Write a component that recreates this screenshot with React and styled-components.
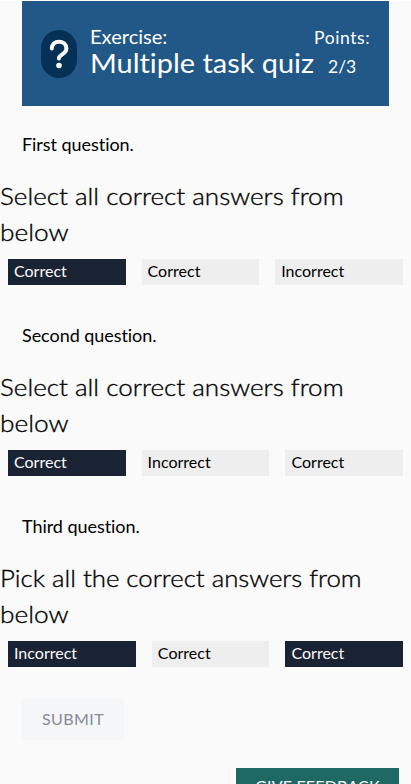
import React from "react";
import styled, { createGlobalStyle } from "styled-components";

const GlobalStyle = createGlobalStyle`
  * { box-sizing: border-box; }
  html, body { margin: 0; background: #fafafa; }
  body { height: 784px; overflow: hidden; font-family: Lato, sans-serif; color: #000; font-variant-ligatures: none; }
`;

const Page = styled.main`
  height: 784px;
  overflow: hidden;
  border-top: 1px solid #fff;
`;

const Header = styled.header`
  display: flex;
  margin: 0 22px;
  height: 105px;
  background: #215887;
  color: #fff;
`;

const Badge = styled.div`
  flex: none;
  width: 36px;
  height: 48px;
  margin: 29px 0 0 19px;
  border-radius: 18px;
  background: #063157;
  svg { display: block; }
`;

const Titles = styled.div`
  flex: none;
  width: 224px;
  margin: 24px 0 0 13px;
  white-space: nowrap;
`;

const Stretch = styled.span`
  display: inline-block;
  transform: scaleX(${(p) => p.$x});
  transform-origin: left;
  white-space: nowrap;
`;

const Kind = styled.div`
  font-size: 18.5px;
  line-height: 25px;
`;

const Title = styled.h1`
  margin: 0;
  font-size: 26.5px;
  font-weight: 400;
  line-height: 26px;
`;

const Points = styled.div`
  width: 57px;
  margin-top: 22px;
  font-size: 17.5px;
  line-height: 29px;
  white-space: nowrap;
  letter-spacing: 0.6px;
`;

const Score = styled.div`
  padding-left: 14px;
  letter-spacing: 0;
`;

const Question = styled.section`
  height: 191px;
`;

const Name = styled.p`
  margin: 0;
  padding: 24px 22px 0;
  height: 72px;
  font-size: 18px;
  line-height: 29px;
  letter-spacing: -0.05px;
`;

const Prompt = styled.h2`
  margin: 0;
  font-size: 24px;
  font-weight: 300;
  line-height: 36px;
  height: 73px;
  -webkit-text-stroke: 0.35px #000;
`;

const Options = styled.div`
  display: flex;
  gap: 16px;
  padding: 8px 8px 0;
`;

const Option = styled.button`
  flex: 1 1 auto;
  height: 26px;
  padding: 0 6px 2px;
  border: 0;
  background: ${(p) => (p.$selected ? "#1a2333" : "#eee")};
  color: ${(p) => (p.$selected ? "#fafafa" : "#000")};
  font: 16px/24px Lato, sans-serif;
  letter-spacing: 0.01px;
  word-spacing: 0;
  font-variant-ligatures: none;
  text-align: left;
`;

const Submit = styled.button`
  display: block;
  width: 102px;
  height: 41px;
  margin: 20px 0 0 22px;
  padding: 0 0 2px;
  border: 0;
  background: #f5f6f7;
  color: #868b98;
  font: 16px/39px Lato, sans-serif;
  letter-spacing: 0.4px;
`;

const Feedback = styled.button`
  display: block;
  width: 163px;
  height: 41px;
  margin: 28px 12px 0 auto;
  padding: 0 0 6px;
  border: 0;
  background: #1f6964;
  color: #fff;
  font: 16px/35px Lato, sans-serif;
  letter-spacing: 0.2px;
`;

const questions = [
  { name: "First question.", lead: "Select all correct answers from", x: 1.085,
    options: [["Correct", true], ["Correct", false], ["Incorrect", false]] },
  { name: "Second question.", lead: "Select all correct answers from", x: 1.085,
    options: [["Correct", true], ["Incorrect", false], ["Correct", false]] },
  { name: "Third question.", lead: "Pick all the correct answers from", x: 1.075,
    options: [["Incorrect", true], ["Correct", false], ["Correct", true]] },
];

export default function App() {
  return (
    <Page>
      <GlobalStyle />
      <Header>
        <Badge>
          <svg width="36" height="48" viewBox="0 0 36 48" fill="none">
            <path d="M10.8 18.5C10.8 14.2 14 11.8 18 11.8s7.4 2.6 7.4 6.7c0 5.8-7.5 5.7-7.5 10" stroke="#fff" strokeWidth="4" strokeLinecap="round" />
            <circle cx="18" cy="35.5" r="2.8" fill="#fff" />
          </svg>
        </Badge>
        <Titles>
          <Kind><Stretch $x={1.085}>Exercise:</Stretch></Kind>
          <Title><Stretch $x={1.09}>Multiple task quiz</Stretch></Title>
        </Titles>
        <Points>
          Points:
          <Score>2/3</Score>
        </Points>
      </Header>
      {questions.map((q) => (
        <Question key={q.name}>
          <Name>{q.name}</Name>
          <Prompt>
            <Stretch $x={q.x}>{q.lead}</Stretch>
            <br />
            <Stretch $x={1.095}>below</Stretch>
          </Prompt>
          <Options>
            {q.options.map(([label, selected], i) => (
              <Option key={i} $selected={selected}>{label}</Option>
            ))}
          </Options>
        </Question>
      ))}
      <Submit>SUBMIT</Submit>
      <Feedback>GIVE FEEDBACK</Feedback>
    </Page>
  );
}
